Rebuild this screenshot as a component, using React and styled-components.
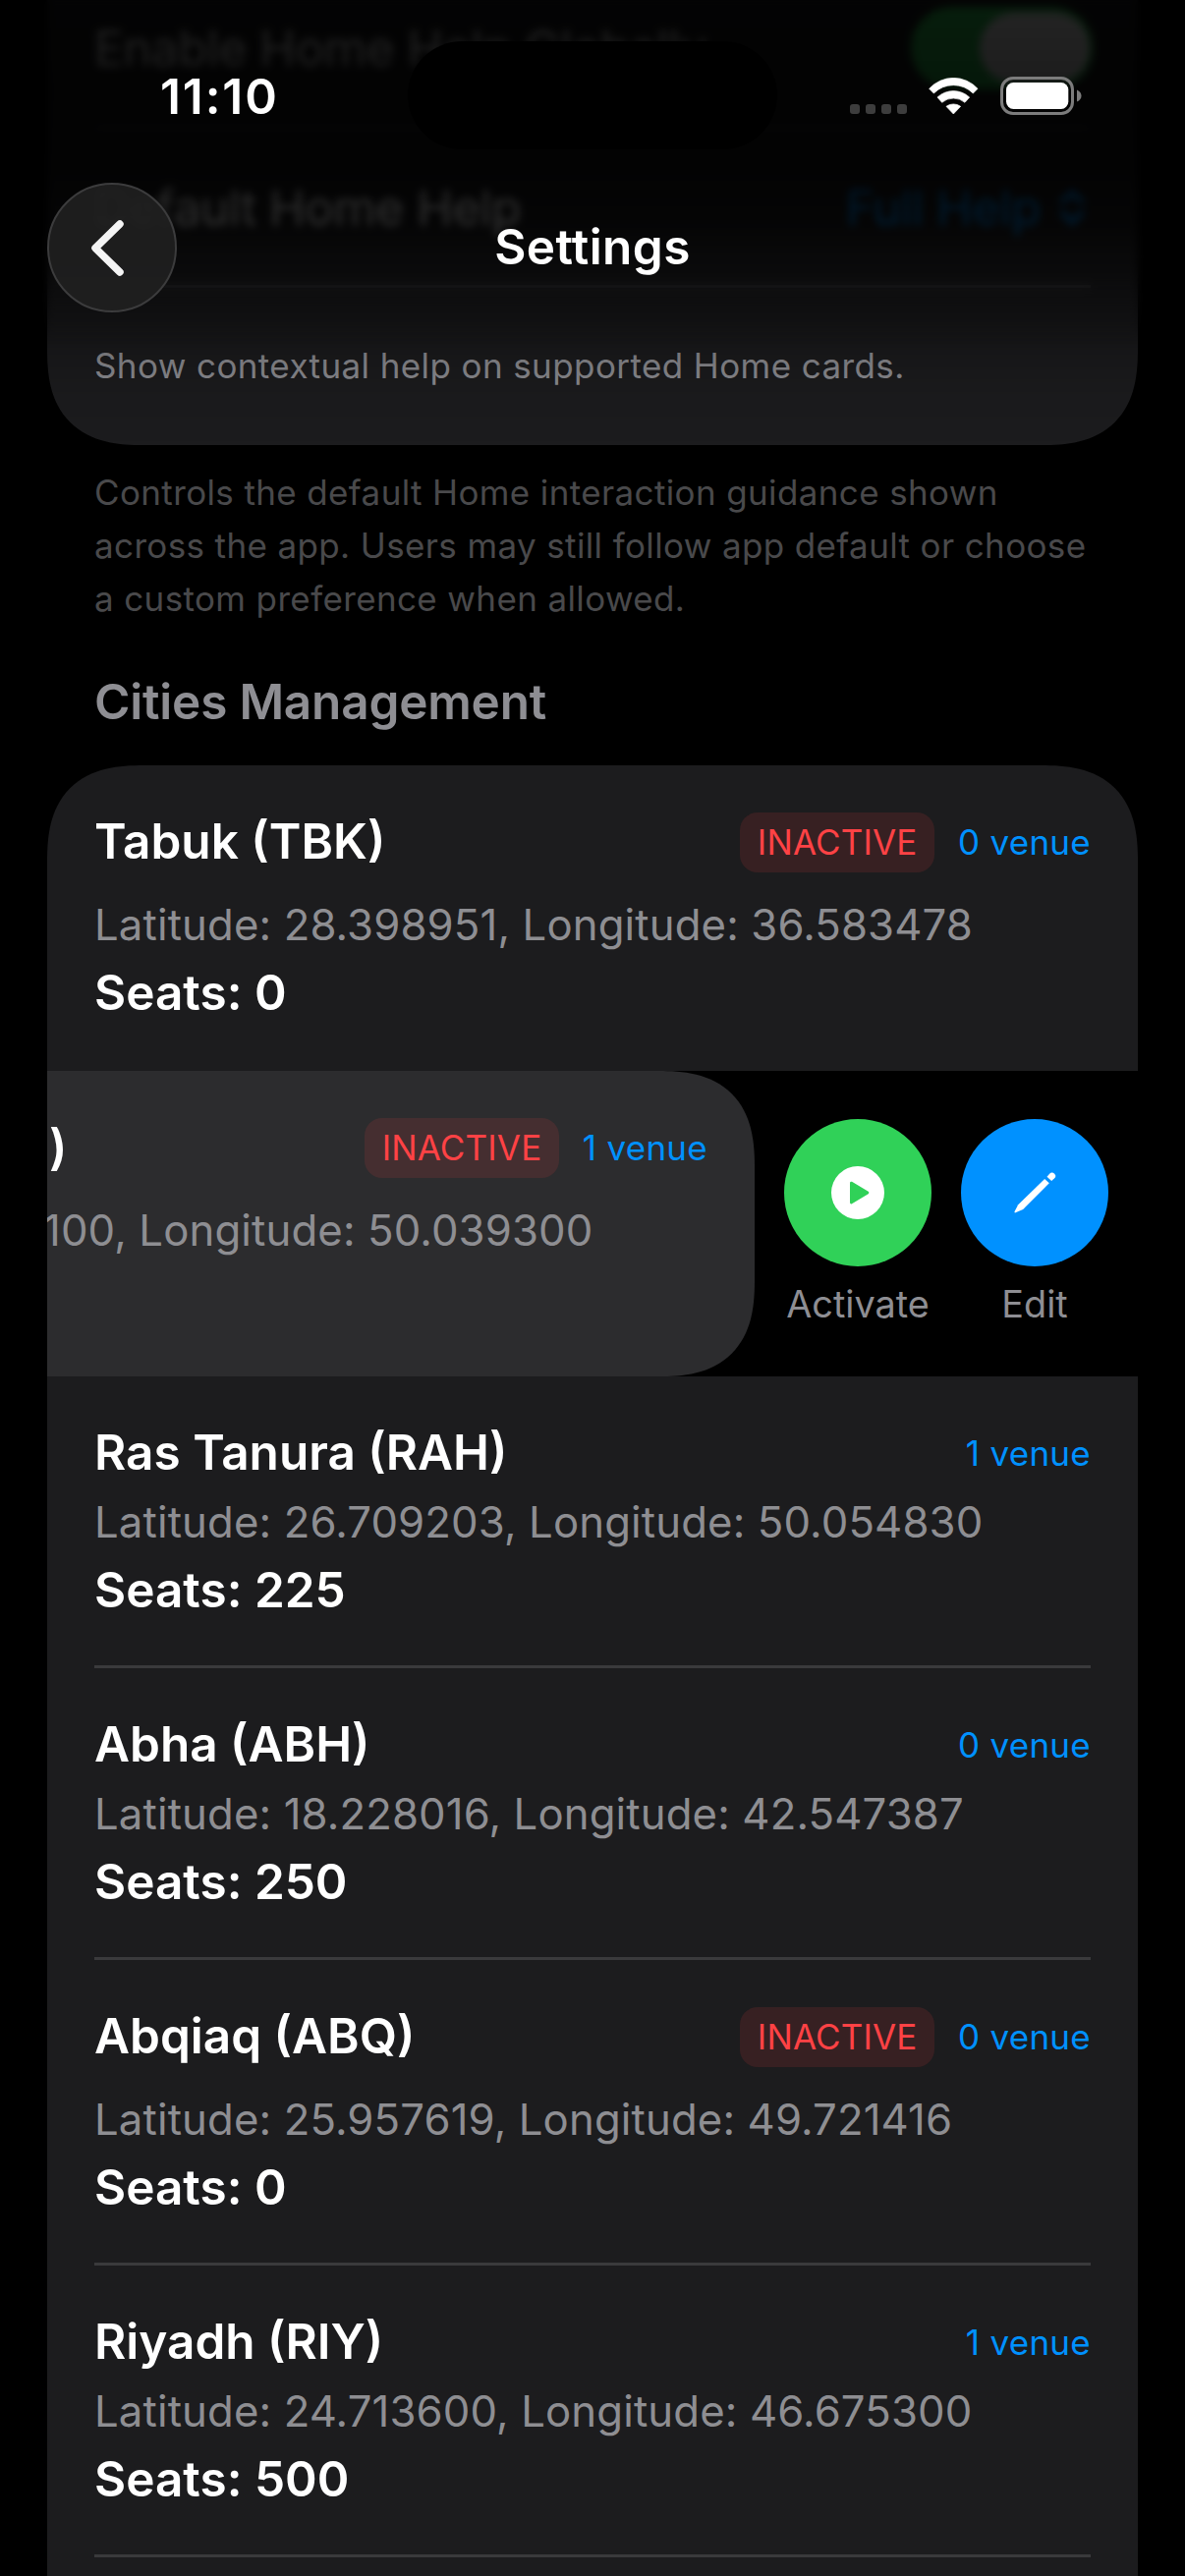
import React from 'react';
import styled, { createGlobalStyle, css } from 'styled-components';
import { ChevronsUpDown } from 'lucide-react';

const GlobalStyle = createGlobalStyle`
  body {
    margin: 0;
    background: #000;
  }

  * {
    box-sizing: border-box;
  }
`;

/* Continuous corners where the browser has them, plain round ones elsewhere */
const corners = (tl, tr, br, bl) => css`
  border-radius: ${tl * 78}px ${tr * 78}px ${br * 78}px ${bl * 78}px;

  @supports (corner-shape: superellipse(1.35)) {
    border-radius: ${tl * 98}px ${tr * 98}px ${br * 98}px ${bl * 98}px;
    corner-shape: superellipse(1.35);
  }
`;

const Screen = styled.main`
  position: relative;
  display: flex;
  flex-direction: column;
  width: 1206px;
  height: 2622px;
  padding: 0 48px;
  overflow: hidden;
  background: #000;
  color: #fff;
  font-family: Inter, 'Liberation Sans', sans-serif;
  white-space: nowrap;
`;

/* Header */

const Header = styled.header`
  position: absolute;
  top: 0;
  left: 0;
  right: 0;
  height: 318px;
`;

const HeaderBlur = styled.div`
  position: absolute;
  top: 0;
  left: 0;
  right: 0;
  height: 350px;
  backdrop-filter: blur(4.5px);
  mask-image: linear-gradient(#000 75%, transparent);
`;

const HeaderFade = styled.div`
  position: absolute;
  top: 0;
  left: 0;
  right: 0;
  height: 450px;
  background: linear-gradient(
    rgba(0, 0, 0, 0.86) 0,
    rgba(0, 0, 0, 0.89) 90px,
    rgba(0, 0, 0, 0.88) 170px,
    rgba(0, 0, 0, 0.8) 230px,
    rgba(0, 0, 0, 0.54) 290px,
    rgba(0, 0, 0, 0.36) 330px,
    rgba(0, 0, 0, 0.18) 360px,
    rgba(0, 0, 0, 0.07) 400px,
    transparent
  );
`;

const StatusBar = styled.div`
  display: grid;
  grid-template-columns: 415px 376px 1fr;
  align-items: center;
  padding-top: 42px;
`;

const Time = styled.div`
  padding: 2px 0 0 163px;
  font-size: 49.5px;
  font-weight: 600;
  line-height: 60px;
  letter-spacing: 1.9px;
`;

const Island = styled.div`
  height: 110px;
  border-radius: 55px;
  background: #000;
`;

const StatusIcons = styled.div`
  display: flex;
  align-items: flex-end;
  justify-content: flex-end;
  gap: 22px;
  padding: 1px 105px 0 0;

  svg {
    display: block;
  }
`;

const NavBar = styled.nav`
  display: grid;
  grid-template-columns: 132px 1fr 132px;
  align-items: center;
  padding: 34px 48px 0;
`;

const BackButton = styled.button`
  height: 132px;
  padding: 0;
  border: 2px solid #3c3c3d;
  border-radius: 50%;
  background: rgba(31, 31, 32, 0.92);

  svg {
    display: block;
  }
`;

const Title = styled.h1`
  margin: 0;
  padding-bottom: 2px;
  font-size: 49.5px;
  font-weight: 600;
  line-height: 60px;
  letter-spacing: 0.4px;
  text-align: center;
`;

/* Grouped sections */

const HelpCard = styled.section`
  flex: none;
  margin-top: -31px;
  background: #1c1c1e;
  ${corners(0, 0, 1, 1)}
`;

const HelpRow = styled.div`
  display: flex;
  align-items: center;
  justify-content: space-between;
  height: ${(props) => (props.$last ? 160 : 162)}px;
  margin: 0 48px;
  padding-bottom: ${(props) => (props.$last ? 2 : 0)}px;
  border-bottom: ${(props) => (props.$last ? 'none' : '3px solid #3a3a3c')};
  font-size: 49.5px;
  letter-spacing: -0.5px;
`;

const Toggle = styled.span`
  display: flex;
  justify-content: flex-end;
  width: 186px;
  height: 84px;
  margin-right: -3px;
  padding: 6px 4px;
  border-radius: 42px;
  background: #30d158;
`;

const Knob = styled.span`
  width: 112px;
  border-radius: 36px;
  background: #fff;
`;

const Picker = styled.span`
  display: flex;
  align-items: center;
  gap: 9px;
  margin-right: -4px;
  color: #0091ff;
`;

const Caption = styled.span`
  color: #8e8e93;
  font-size: 35px;
  letter-spacing: 0.4px;
`;

const Footnote = styled.p`
  margin: 21px 48px 0;
  color: #49494b;
  font-size: 35px;
  line-height: 54px;
  letter-spacing: 0.37px;
  white-space: normal;
`;

const SectionTitle = styled.h2`
  margin: 45px 48px 32px;
  color: #8e8e93;
  font-size: 49.5px;
  font-weight: 600;
  line-height: 66px;
  letter-spacing: -0.2px;
`;

const CityCard = styled.section`
  flex: 1;
  min-height: 0;
  background: #1c1c1e;
  ${corners(1, 1, 0, 0)}
`;

const CityRow = styled.article`
  display: flex;
  flex-direction: column;
  gap: 11px;
  height: ${(props) => (props.$inactive ? 311 : 297)}px;
  margin: 0 48px;
  padding-top: 44px;
  border-bottom: ${(props) => (props.$divider ? '3px solid #3a3a3c' : 'none')};
`;

const CityHead = styled.div`
  display: flex;
  align-items: center;
  justify-content: space-between;
  height: 66px;
  margin-bottom: ${(props) => (props.$inactive ? 14 : 0)}px;
`;

const CityName = styled.h3`
  margin: 0;
  font-size: 49.5px;
  font-weight: 600;
  line-height: 66px;
`;

const CityMeta = styled.div`
  display: flex;
  align-items: center;
  gap: 24px;
  padding-top: 3px;
  font-size: 35px;
  line-height: 61px;
  letter-spacing: 0.27px;
`;

const Badge = styled.span`
  padding: 0 17.5px;
  border-radius: 18px;
  background: rgba(255, 66, 69, 0.12);
  color: #ff4245;
  letter-spacing: 0.15px;
`;

const Venues = styled.span`
  color: #0091ff;
`;

const Coordinates = styled.div`
  color: #8e8e92;
  font-size: 43.7px;
  line-height: 56px;
  letter-spacing: 0.13px;
`;

const Seats = styled.div`
  font-size: 49.5px;
  font-weight: 600;
  line-height: 58px;
`;

/* Row pulled to the left, with its actions showing */

const SwipeRow = styled.article`
  display: flex;
  height: 311px;
  background: #000;
`;

const SwipedCell = styled.div`
  display: flex;
  flex-direction: column;
  gap: 11px;
  width: 720px;
  padding: 44px 48px 0 0;
  overflow: hidden;
  background: #2c2c2e;
  ${corners(0, 1, 1, 0)}

  ${CityName} {
    padding-left: 2px;
  }

  ${Coordinates} {
    margin-left: -4px;
  }
`;

const Actions = styled.div`
  display: flex;
  gap: 30px;
  padding: 49px 30px 0;
`;

const Action = styled.div`
  display: flex;
  flex-direction: column;
  align-items: center;
  gap: 14px;
  width: 150px;
  color: #8e8e93;
  font-size: 37.8px;
  line-height: 48px;
`;

const ActionButton = styled.button`
  display: flex;
  align-items: center;
  justify-content: center;
  width: 150px;
  height: 150px;
  padding: 0;
  border: 0;
  border-radius: 50%;
  background: ${(props) => props.$color};
`;

const cities = [
  { name: 'Ras Tanura (RAH)', lat: '26.709203', lng: '50.054830', seats: 225, venues: 1 },
  { name: 'Abha (ABH)', lat: '18.228016', lng: '42.547387', seats: 250, venues: 0 },
  { name: 'Abqiaq (ABQ)', lat: '25.957619', lng: '49.721416', seats: 0, venues: 0, inactive: true },
  { name: 'Riyadh (RIY)', lat: '24.713600', lng: '46.675300', seats: 500, venues: 1 },
];

function SignalIcon() {
  return (
    <svg width="58" height="11" viewBox="0 0 58 11" fill="#3d3d3d">
      <rect width="10" height="10" rx="3" />
      <rect x="16" width="10" height="10" rx="3" />
      <rect x="32" width="10" height="10" rx="3" />
      <rect x="48" width="10" height="10" rx="3" />
    </svg>
  );
}

function WifiIcon() {
  return (
    <svg width="51" height="38" viewBox="-1 -1 153 114" fill="#fff" stroke="#fff" strokeWidth="2" strokeLinejoin="round">
      <path d="M1 33 A99.5 99.5 0 0 1 149 33 L135 47 A84.5 84.5 0 0 0 15 47 Z" />
      <path d="M26 59 A72 72 0 0 1 124 59 L110 75 A54 54 0 0 0 40 75 Z" />
      <path d="M53 87 A37 37 0 0 1 97 87 L75 110 Z" />
    </svg>
  );
}

function BatteryIcon() {
  return (
    <svg width="83" height="39" viewBox="0 0 83 39">
      <rect x="1.5" y="1.5" width="72" height="36" rx="11.5" fill="none" stroke="#7c7c7c" strokeWidth="3" />
      <rect x="6" y="6" width="63.3" height="27" rx="7.5" fill="#fff" />
      <path d="M78 13.5 Q82.5 15.5 82.5 19.5 Q82.5 23.5 78 25.5 Z" fill="#7c7c7c" />
    </svg>
  );
}

function BackIcon() {
  return (
    <svg width="128" height="128" viewBox="2 2 128 128" fill="none" stroke="#f4f4f4" strokeWidth="7.5" strokeLinecap="round" strokeLinejoin="round">
      <path d="M74 42 L49 66.5 L74 91" />
    </svg>
  );
}

function PlayIcon() {
  return (
    <svg width="54" height="54" viewBox="0 0 162 162">
      <circle cx="81" cy="81" r="81" fill="#fff" />
      <path d="M61 51 L111 81 L61 111 Z" fill="#30d158" stroke="#30d158" strokeWidth="8" strokeLinejoin="round" />
    </svg>
  );
}

function PencilIcon() {
  return (
    <svg width="43" height="42" viewBox="0 0 128 126" fill="#fff">
      <path d="M93 21 L107 34 L27 114 L4 124 Q0 125 1 121 L12 100 Z" />
      <path d="M100 14 L108 5 Q115 -2 123 5 Q130 12 123 19 L114 27 Z" />
    </svg>
  );
}

function Meta({ inactive, venues }) {
  return (
    <CityMeta>
      {inactive && <Badge>INACTIVE</Badge>}
      <Venues>{venues} venue</Venues>
    </CityMeta>
  );
}

function City({ city, divider }) {
  return (
    <CityRow $inactive={city.inactive} $divider={divider}>
      <CityHead $inactive={city.inactive}>
        <CityName>{city.name}</CityName>
        <Meta inactive={city.inactive} venues={city.venues} />
      </CityHead>
      <Coordinates>
        Latitude: {city.lat}, Longitude: {city.lng}
      </Coordinates>
      <Seats>Seats: {city.seats}</Seats>
    </CityRow>
  );
}

function App() {
  return (
    <Screen>
      <GlobalStyle />
      <HelpCard>
        <HelpRow>
          <span>Enable Home Help Globally</span>
          <Toggle>
            <Knob />
          </Toggle>
        </HelpRow>
        <HelpRow>
          <span>Default Home Help</span>
          <Picker>
            Full Help
            <ChevronsUpDown size={46} strokeWidth={2.6} />
          </Picker>
        </HelpRow>
        <HelpRow $last>
          <Caption>Show contextual help on supported Home cards.</Caption>
        </HelpRow>
      </HelpCard>
      <Footnote>
        Controls the default Home interaction guidance shown across the app. Users may still follow
        app default or choose a custom preference when allowed.
      </Footnote>
      <SectionTitle>Cities Management</SectionTitle>
      <CityCard>
        <City
          city={{ name: 'Tabuk (TBK)', lat: '28.398951', lng: '36.583478', seats: 0, venues: 0, inactive: true }}
        />
        <SwipeRow>
          <SwipedCell>
            <CityHead $inactive>
              <CityName>)</CityName>
              <Meta inactive venues={1} />
            </CityHead>
            <Coordinates>100, Longitude: 50.039300</Coordinates>
          </SwipedCell>
          <Actions>
            <Action>
              <ActionButton $color="#30d158">
                <PlayIcon />
              </ActionButton>
              Activate
            </Action>
            <Action>
              <ActionButton $color="#0091ff">
                <PencilIcon />
              </ActionButton>
              Edit
            </Action>
          </Actions>
        </SwipeRow>
        {cities.map((city) => (
          <City key={city.name} city={city} divider />
        ))}
      </CityCard>
      <HeaderBlur />
      <HeaderFade />
      <Header>
        <StatusBar>
          <Time>11:10</Time>
          <Island />
          <StatusIcons>
            <SignalIcon />
            <WifiIcon />
            <BatteryIcon />
          </StatusIcons>
        </StatusBar>
        <NavBar>
          <BackButton>
            <BackIcon />
          </BackButton>
          <Title>Settings</Title>
        </NavBar>
      </Header>
    </Screen>
  );
}

export default App;
